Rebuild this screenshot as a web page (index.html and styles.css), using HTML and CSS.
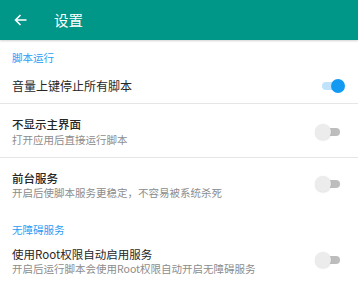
FILE: index.html
```html
<!DOCTYPE html>
<html lang="zh">
<head>
<meta charset="utf-8">
<link rel="stylesheet" href="styles.css">
</head>
<body>
<div class="app">
  <header class="bar">
    <svg class="back" width="13" height="12" viewBox="0 0 13 12"><path d="M12.5 6H1.5M6.5 1L1.5 6L6.5 11" fill="none" stroke="#fff" stroke-width="1.6"/></svg>
    <span class="title">设置</span>
  </header>
  <div class="section s1">脚本运行</div>
  <div class="item single">
    <div class="text"><div class="t big">音量上键停止所有脚本</div></div>
    <div class="switch on"><span class="track"></span><span class="thumb"></span></div>
  </div>
  <div class="divider"></div>
  <div class="item i2">
    <div class="text"><div class="t bold">不显示主界面</div><div class="s">打开应用后直接运行脚本</div></div>
    <div class="switch"><span class="track"></span><span class="thumb"></span></div>
  </div>
  <div class="divider"></div>
  <div class="item i3">
    <div class="text"><div class="t bold">前台服务</div><div class="s">开启后使脚本服务更稳定，不容易被系统杀死</div></div>
    <div class="switch"><span class="track"></span><span class="thumb"></span></div>
  </div>
  <div class="section s2">无障碍服务</div>
  <div class="item i4">
    <div class="text"><div class="t">使用Root权限自动启用服务</div><div class="s">开启后运行脚本会使用Root权限自动开启无障碍服务</div></div>
    <div class="switch"><span class="track"></span><span class="thumb"></span></div>
  </div>
</div>
</body>
</html>
```

FILE: styles.css
```css
* { box-sizing: border-box; }
html, body { margin: 0; padding: 0; background: #fff; }
body { font-family: "Noto Sans CJK SC", "Noto Sans", sans-serif; overflow: hidden; }
.app { width: 358px; height: 281px; }
.bar {
  height: 40px;
  background: #009688;
  display: flex;
  align-items: center;
  padding-left: 14px;
  box-shadow: 0 1px 2px rgba(0,0,0,0.18);
  position: relative;
}
.back { display: block; }
.title { color: #fff; font-size: 14.5px; margin-left: 27px; line-height: 20px; }
.section {
  color: #2a9df4;
  font-size: 10.5px;
  line-height: 20px;
  padding-left: 12px;
}
.s1 { padding-top: 8px; }
.s2 { padding-top: 12px; }
.item {
  display: flex;
  align-items: center;
  padding: 0 16px 0 12px;
}
.text { flex: 1; }
.t { color: #262626; font-size: 11.5px; line-height: 16px; }
.t.big { font-size: 12px; }
.t.bold { font-weight: 500; }
.s { color: #8c8c8c; font-size: 10.5px; line-height: 16px; }
.single { height: 35px; }
.i2 { height: 53px; padding-top: 2px; }
.i3 { height: 50px; padding-top: 2px; }
.i3 .s, .i4 .s { line-height: 13px; }
.i4 { height: 40px; }
.divider { height: 1px; background: #e6e6e6; }
.switch { position: relative; width: 30px; height: 16px; }
.track {
  position: absolute; left: 8px; top: 4px; width: 20px; height: 8px; border-radius: 4px;
  background: #bdbdbd;
}
.thumb {
  position: absolute; left: 3px; top: 0; width: 16px; height: 16px; border-radius: 50%;
  background: #ececec;
  box-shadow: 0 0.5px 1.5px rgba(0,0,0,0.15);
}
.switch.on .track { left: 10px; width: 18px; background: #bfe3fb; }
.switch.on .thumb { left: 19px; width: 14px; height: 14px; top: 1px; background: #129af3; box-shadow: none; }
```
